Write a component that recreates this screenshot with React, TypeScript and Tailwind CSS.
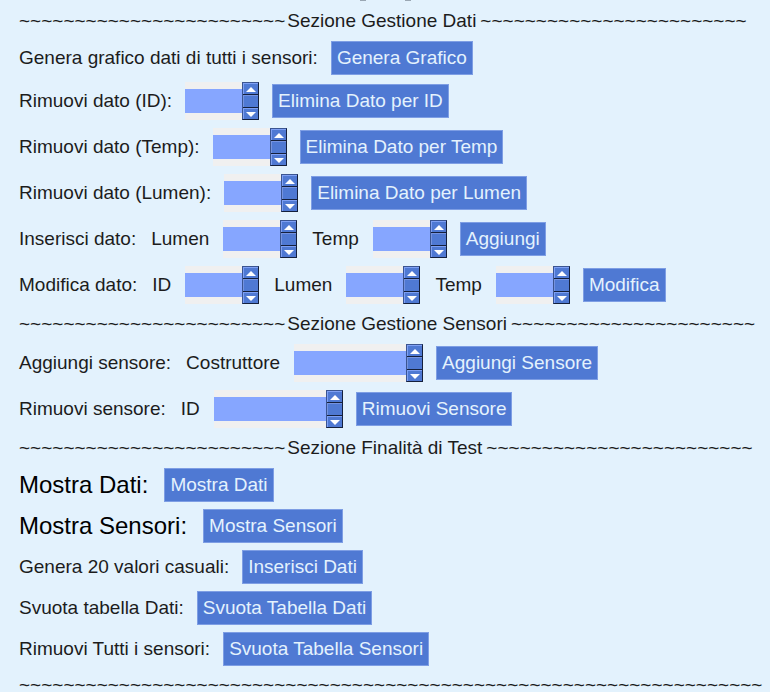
import React, { useState } from "react";

function Heading({ title, before, after }: { title: string; before: number; after: number }) {
  return (
    <h2 className="flex h-8 items-center gap-[2px] whitespace-nowrap">
      <span aria-hidden="true" className="leading-3">{"~".repeat(before)}</span>
      {title && <span>{title}</span>}
      {after > 0 && <span aria-hidden="true" className="pl-[2px] leading-3">{"~".repeat(after)}</span>}
    </h2>
  );
}

function Row({ label, large, tall, children }: { label: string; large?: boolean; tall?: boolean; children: React.ReactNode }) {
  return (
    <div className={`flex items-center whitespace-nowrap ${tall ? "h-[46px]" : "h-[41px]"}`}>
      <span className={large ? "mr-4 text-[24px] text-black" : "mr-[13px]"}>{label}</span>
      {children}
    </div>
  );
}

function ScrollButton({ up, onClick, label }: { up?: boolean; onClick: () => void; label: string }) {
  return (
    <button
      type="button"
      aria-label={label}
      onClick={onClick}
      className="flex h-[11px] w-full items-center justify-center border-t border-l border-[#7fa0f4] bg-[#4f79d3]"
    >
      <svg width="10" height="5" viewBox="0 0 10 5" fill="white">
        <path d={up ? "M5 0 L10 5 H0 Z" : "M0 0 H10 L5 5 Z"} />
      </svg>
    </button>
  );
}

function Field({ id, label, caption, wide }: { id: string; label: string; caption?: boolean; wide?: boolean }) {
  const [value, setValue] = useState("");
  const step = (n: number) => setValue(String((Number(value) || 0) + n));
  return (
    <>
      {caption && (
        <label htmlFor={id} className="mr-[14px] ml-[2px]">
          {label}
        </label>
      )}
      <div className="mr-[13px] flex h-[38px] bg-[#f0f0f0]">
        <input
          id={id}
          aria-label={label}
          value={value}
          onChange={(e) => setValue(e.target.value)}
          className={`my-[7px] bg-[#86a6ff] px-1 text-black outline-none ${wide ? "w-[112px]" : "w-[57px]"}`}
        />
        <div className="flex w-[17px] flex-col gap-px border-t border-r border-b border-l border-t-[#3b5591] border-r-[#15203c] border-b-[#15203c] border-l-[#3b5591] bg-[#15203c]">
          <ScrollButton up label={`${label} +`} onClick={() => step(1)} />
          <div className="flex-1 border-t border-l border-[#7593e0] bg-[#4f79d3]" />
          <ScrollButton label={`${label} -`} onClick={() => step(-1)} />
        </div>
      </div>
    </>
  );
}

function Action({ children }: { children: React.ReactNode }) {
  return (
    <button type="button" className="h-[34px] border border-[#7e9ee4] bg-[#4f79d3] px-[5px] text-[#e4f2fd]">
      {children}
    </button>
  );
}

export default function App() {
  return (
    <main className="min-h-screen bg-[#e3f2fd] pl-[19px] font-['Liberation_Sans',Arial,sans-serif] text-[19px] leading-6 text-[#1c1c1c]">
      <div aria-hidden="true" className="flex h-[5px] gap-[39px] pl-[341px]">
        <span className="h-px w-[6px] bg-[#9aa7b3]" />
        <span className="h-px w-[6px] bg-[#9aa7b3]" />
      </div>
      <Heading before={24} title="Sezione Gestione Dati" after={24} />
      <Row label="Genera grafico dati di tutti i sensori:">
        <Action>Genera Grafico</Action>
      </Row>
      <Row label="Rimuovi dato (ID):" tall>
        <Field id="remove-id" label="ID" />
        <Action>Elimina Dato per ID</Action>
      </Row>
      <Row label="Rimuovi dato (Temp):" tall>
        <Field id="remove-temp" label="Temp" />
        <Action>Elimina Dato per Temp</Action>
      </Row>
      <Row label="Rimuovi dato (Lumen):" tall>
        <Field id="remove-lumen" label="Lumen" />
        <Action>Elimina Dato per Lumen</Action>
      </Row>
      <Row label="Inserisci dato:" tall>
        <Field id="add-lumen" label="Lumen" caption />
        <Field id="add-temp" label="Temp" caption />
        <Action>Aggiungi</Action>
      </Row>
      <Row label="Modifica dato:" tall>
        <Field id="edit-id" label="ID" caption />
        <Field id="edit-lumen" label="Lumen" caption />
        <Field id="edit-temp" label="Temp" caption />
        <Action>Modifica</Action>
      </Row>
      <Heading before={24} title="Sezione Gestione Sensori" after={22} />
      <Row label="Aggiungi sensore:" tall>
        <Field id="sensor-name" label="Costruttore" caption wide />
        <Action>Aggiungi Sensore</Action>
      </Row>
      <Row label="Rimuovi sensore:" tall>
        <Field id="sensor-id" label="ID" caption wide />
        <Action>Rimuovi Sensore</Action>
      </Row>
      <Heading before={24} title="Sezione Finalità di Test" after={24} />
      <Row label="Mostra Dati:" large>
        <Action>Mostra Dati</Action>
      </Row>
      <Row label="Mostra Sensori:" large>
        <Action>Mostra Sensori</Action>
      </Row>
      <Row label="Genera 20 valori casuali:">
        <Action>Inserisci Dati</Action>
      </Row>
      <Row label="Svuota tabella Dati:">
        <Action>Svuota Tabella Dati</Action>
      </Row>
      <Row label="Rimuovi Tutti i sensori:">
        <Action>Svuota Tabella Sensori</Action>
      </Row>
      <Heading before={67} title="" after={0} />
    </main>
  );
}
